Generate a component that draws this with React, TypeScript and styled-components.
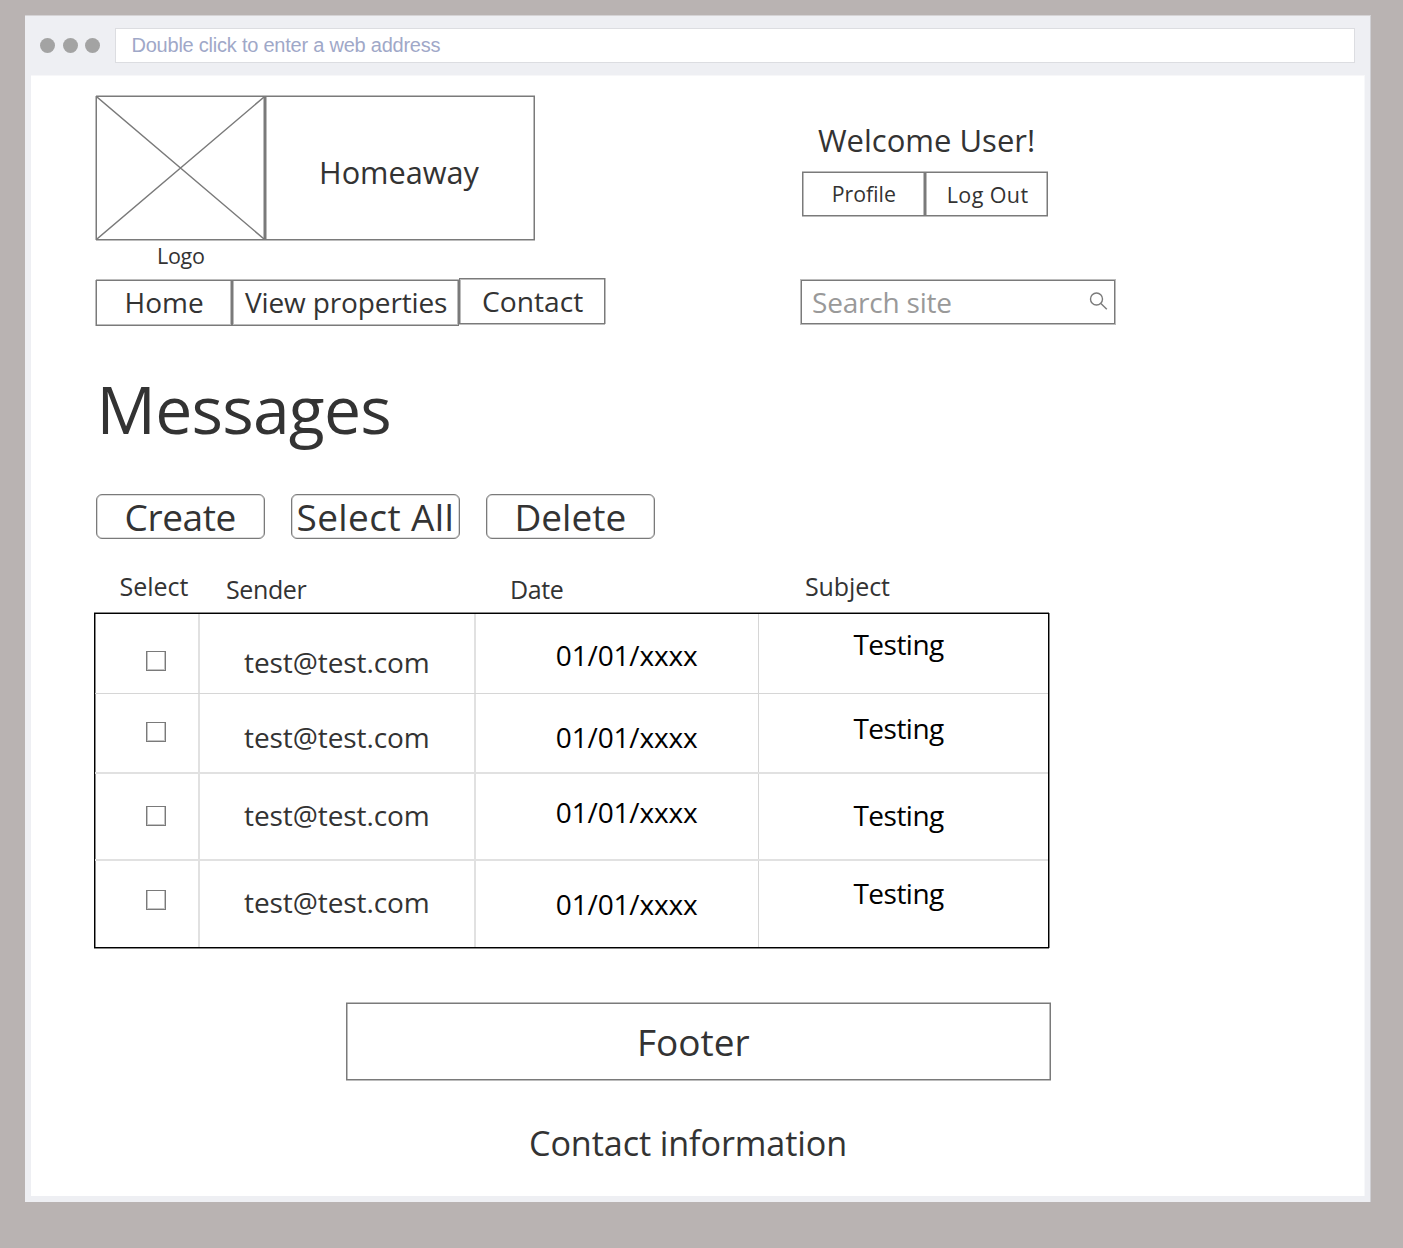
import React from "react";
import styled, { createGlobalStyle } from "styled-components";

const INK = "#333333";
const LINE = "#7a7a7a";
const SOFT = "#bcbcbc";

const GlobalStyle = createGlobalStyle`
  *, *::before, *::after { box-sizing: border-box; }
  html, body { margin: 0; background: #b9b3b2; }
  body { font-family: "Open Sans", "Noto Sans", sans-serif; color: ${INK}; }
`;

const Desktop = styled.div`
  height: 1248px;
  padding: 15px 32px 46px 25px;
  background: #b9b3b2;
`;

const Browser = styled.div`
  display: flex;
  flex-direction: column;
  width: 1346px;
  height: 1187px;
  padding: 0 5px 6px 6px;
  background: #eeeff3;
  border-top: 1px solid #d5d3d5;
  border-right: 1px solid #cfcfd3;
`;

const Toolbar = styled.div`
  display: flex;
  align-items: center;
  height: 59px;
  padding: 0 10px 0 9px;
`;

const Dots = styled.div`
  display: flex;
  gap: 7.5px;
  width: 75px;
`;

const Dot = styled.span`
  width: 15px;
  height: 15px;
  border-radius: 50%;
  background: #a3a3a3;
`;

const Address = styled.div`
  flex: 1;
  height: 35px;
  padding-left: 15.5px;
  border: 1px solid #dcdde1;
  background: #fff;
  color: #9fa8c8;
  font: 20px/33px "Liberation Sans", Arial, sans-serif;
  letter-spacing: -0.23px;
`;

const Content = styled.main`
  flex: 1;
  padding: 19px 0 0 64px;
  background: #fff;
  border-top: 1px solid #f7f7f9;
  border-right: 1px solid #f7f8fa;
`;

/* One line of text, set by the baseline inside its box. */
const Label = styled.span<{ $size: number; $left: number; $base: number; $spacing?: number; $color?: string }>`
  display: block;
  padding-top: ${(p) => Math.round(p.$base - p.$size * 0.888)}px;
  padding-left: ${(p) => p.$left}px;
  font-size: ${(p) => p.$size}px;
  line-height: 1;
  letter-spacing: ${(p) => p.$spacing ?? 0}px;
  color: ${(p) => p.$color ?? "inherit"};
  white-space: nowrap;
`;

const Frame = styled.div<{ $w: number; $h: number }>`
  flex: none;
  width: ${(p) => p.$w}px;
  height: ${(p) => p.$h}px;
  border: 1px solid ${LINE};
  box-shadow: 0 -1px 0 ${SOFT}, 0 1px 0 ${SOFT}, inset 1px 0 0 ${SOFT}, inset -1px 0 0 ${SOFT};
  background: #fff;
`;

const Tab = styled(Frame)`
  box-shadow: 0 -1px 0 ${SOFT}, inset 0 -1px 0 ${SOFT}, inset 1px 0 0 ${SOFT}, inset -1px 0 0 ${SOFT};
`;

const FirstTab = styled(Frame)`
  box-shadow: -1px 0 0 ${SOFT}, 0 -1px 0 ${SOFT}, inset 0 -1px 0 ${SOFT}, inset -1px 0 0 ${SOFT};
`;

const Row = styled.div<{ $h: number }>`
  display: flex;
  height: ${(p) => p.$h}px;
`;

const Left = styled.div`
  width: 705px;
`;

const Brand = styled.div`
  display: flex;
  height: 146px;
  padding: 1px 0 0 1px;
`;

const LogoFrame = styled(Frame)`
  box-shadow: -1px 0 0 ${SOFT}, 0 -1px 0 ${SOFT}, 0 1px 0 ${SOFT}, inset -1px 0 0 ${SOFT};
`;

const Cross = styled.svg`
  display: block;
`;

const Caption = styled.div`
  height: 37px;
`;

const Account = styled.div`
  display: flex;
  flex-direction: column;
`;

const Greeting = styled.div`
  height: 77px;
`;

const Buttons = styled.div`
  display: flex;
  padding-left: 2px;
`;

const Nav = styled.nav`
  display: flex;
  align-items: flex-end;
  width: 706px;
  height: 48px;
  padding-left: 1px;
`;

const ContactTab = styled(Frame)`
  align-self: flex-start;
  box-shadow: 1px 0 0 ${SOFT}, 0 1px 0 ${SOFT}, inset 0 1px 0 ${SOFT}, inset 1px 0 0 ${SOFT};
`;

const Search = styled(Frame)`
  display: flex;
  justify-content: space-between;
  margin-top: 2px;
  padding-right: 6px;
  box-shadow: 0 0 0 1px ${SOFT};
`;

const SearchIcon = styled.svg`
  margin-top: 10.5px;
`;

const Title = styled.h1`
  height: 168px;
  margin: 0;
  font-weight: 400;
`;

const Actions = styled.div`
  display: flex;
  gap: 26px;
  height: 78px;
  padding-left: 1px;
`;

const Action = styled.button`
  width: 169px;
  height: 45px;
  padding: 0;
  border: 1px solid ${LINE};
  border-radius: 6px;
  box-shadow: inset 0 0 0 0.6px ${SOFT};
  background: #fff;
  color: ${INK};
  font-family: inherit;
  text-align: left;
`;

const COLUMNS = "103px 276px 284px 1fr";

const Headings = styled.div`
  display: grid;
  grid-template-columns: ${COLUMNS};
  width: 955px;
  height: 41px;
`;

const Table = styled.div`
  display: grid;
  grid-template-rows: 79px 79px 87px 1fr;
  width: 955px;
  height: 335px;
  margin-left: -1px;
  border: 1px solid #000;
  box-shadow: 0 -1px 0 #888, 0 1px 0 #888, 1px 0 0 #888, inset 1px 0 0 #888;
`;

const TableRow = styled.div<{ $rule: number }>`
  display: grid;
  grid-template-columns: ${COLUMNS};
  border-top: ${(p) => p.$rule}px solid ${(p) => (p.$rule > 1 ? "#e1e1e1" : "#d6d6d6")};
`;

const Cell = styled.div<{ $rule?: number }>`
  min-width: 0;
  border-left: ${(p) => p.$rule ?? 0}px solid ${(p) => (p.$rule === 2 ? "#e1e1e1" : "#d6d6d6")};
`;

const Checkbox = styled.div<{ $top: number }>`
  width: 20px;
  height: 20px;
  margin: ${(p) => p.$top}px 0 0 51px;
  border: 1px solid ${LINE};
  box-shadow: inset -1px -1px 0 #c4c4c4, inset 1px 0 0 #c4c4c4;
`;

const Footer = styled.footer`
  padding: 55px 0 0 251px;
`;

const rows = [
  { rule: 0, box: 37, sender: 59, date: 52, subject: 41 },
  { rule: 1, box: 28, sender: 54, date: 54, subject: 45 },
  { rule: 2, box: 32, sender: 52, date: 49, subject: 52 },
  { rule: 2, box: 29, sender: 52, date: 54, subject: 43 },
];

export default function App() {
  return (
    <Desktop>
      <GlobalStyle />
      <Browser>
        <Toolbar>
          <Dots><Dot /><Dot /><Dot /></Dots>
          <Address>Double click to enter a web address</Address>
        </Toolbar>
        <Content>
          <Row $h={183}>
            <Left>
              <Brand>
                <LogoFrame $w={169} $h={144}>
                  <Cross width="167" height="142" viewBox="0 0 167 142" stroke={LINE} strokeWidth="1.4">
                    <path d="M0 0L167 142M167 0L0 142" />
                  </Cross>
                </LogoFrame>
                <Frame $w={270} $h={144}>
                  <Label $size={30.7} $left={53} $base={87}>Homeaway</Label>
                </Frame>
              </Brand>
              <Caption><Label $size={21.5} $left={62} $base={23} $spacing={-0.3}>Logo</Label></Caption>
            </Left>
            <Account>
              <Greeting><Label $size={31} $left={18} $base={58}>Welcome User!</Label></Greeting>
              <Buttons>
                <Frame $w={123} $h={44}><Label $size={21.3} $left={28.7} $base={29}>Profile</Label></Frame>
                <Frame $w={123} $h={44}><Label $size={21.5} $left={20.7} $base={30} $spacing={0.4}>Log Out</Label></Frame>
              </Buttons>
            </Account>
          </Row>
          <Row $h={48}>
            <Nav>
              <FirstTab $w={136} $h={46}><Label $size={28} $left={27.5} $base={32}>Home</Label></FirstTab>
              <Tab $w={227} $h={46}><Label $size={28} $left={12} $base={32} $spacing={-0.13}>View properties</Label></Tab>
              <ContactTab $w={146} $h={46}><Label $size={28.2} $left={22} $base={33}>Contact</Label></ContactTab>
            </Nav>
            <Search $w={314} $h={44}>
              <Label $size={28} $left={10} $base={32} $spacing={-0.2} $color="#999">Search site</Label>
              <SearchIcon width="19" height="19" viewBox="0 0 19 19" fill="none" stroke={LINE} strokeWidth="1.4">
                <circle cx="7.5" cy="7" r="6" />
                <path d="M11.9 11.4L17.8 17.3" />
              </SearchIcon>
            </Search>
          </Row>
          <Title><Label $size={66} $left={1.6} $base={108} $spacing={-0.75}>Messages</Label></Title>
          <Actions>
            <Action><Label $size={37} $left={27.5} $base={33} $spacing={-0.4}>Create</Label></Action>
            <Action><Label $size={37} $left={4.5} $base={33} $spacing={0.4}>Select All</Label></Action>
            <Action><Label $size={37} $left={27.5} $base={33}>Delete</Label></Action>
          </Actions>
          <Headings>
            <Label $size={25} $left={24.5} $base={24}>Select</Label>
            <Label $size={25} $left={28} $base={27} $spacing={-0.4}>Sender</Label>
            <Label $size={25} $left={36} $base={27} $spacing={-0.4}>Date</Label>
            <Label $size={25} $left={47} $base={24} $spacing={-0.1}>Subject</Label>
          </Headings>
          <Table>
            {rows.map((r, i) => (
              <TableRow key={i} $rule={r.rule}>
                <Cell><Checkbox $top={r.box} /></Cell>
                <Cell $rule={2}><Label $size={28} $left={44} $base={r.sender} $spacing={-0.08}>test@test.com</Label></Cell>
                <Cell $rule={2}><Label $size={28} $left={79.8} $base={r.date} $spacing={-0.15} $color="#000">01/01/xxxx</Label></Cell>
                <Cell $rule={1}><Label $size={28} $left={94.4} $base={r.subject} $spacing={-0.5} $color="#000">Testing</Label></Cell>
              </TableRow>
            ))}
          </Table>
          <Footer>
            <Frame $w={705} $h={77}><Label $size={37} $left={290} $base={52}>Footer</Label></Frame>
            <Label $size={34.2} $left={183} $base={76} $spacing={-0.12}>Contact information</Label>
          </Footer>
        </Content>
      </Browser>
    </Desktop>
  );
}
